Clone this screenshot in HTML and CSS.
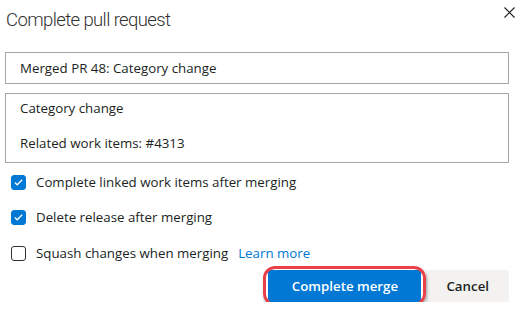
FILE: index.html
```html
<!DOCTYPE html>
<html lang="en">

<head>
    <meta charset="utf-8">
    <title>Complete pull request</title>
    <link rel="stylesheet" href="styles.css">
</head>

<body>
    <div class="dialog">
        <div class="header">
            <h1 class="title">Complete pull request</h1>
            <span class="close">
                <svg width="11" height="11" viewBox="0 0 11 11">
                    <path d="M0.5 0.5 L10.5 10.5 M10.5 0.5 L0.5 10.5" stroke="#222" stroke-width="1.2" fill="none" />
                </svg>
            </span>
        </div>

        <div class="field">Merged PR 48: Category change</div>

        <div class="field area">
            <div>Category change</div>
            <div>Related work items: #4313</div>
        </div>

        <div class="options">
            <label class="option">
                <span class="check on">
                    <svg width="9" height="7" viewBox="0 0 9 7"><path d="M0.8 3.6 L3.2 5.8 L8.2 0.8" stroke="#fff" stroke-width="1.3" fill="none" /></svg>
                </span>
                Complete linked work items after merging
            </label>
            <label class="option">
                <span class="check on">
                    <svg width="9" height="7" viewBox="0 0 9 7"><path d="M0.8 3.6 L3.2 5.8 L8.2 0.8" stroke="#fff" stroke-width="1.3" fill="none" /></svg>
                </span>
                Delete release after merging
            </label>
            <label class="option">
                <span class="check"></span>
                Squash changes when merging
                <a class="link" href="#">Learn more</a>
            </label>
        </div>

        <div class="footer">
            <span class="highlight">
                <button class="btn primary">Complete merge</button>
            </span>
            <button class="btn">Cancel</button>
        </div>
    </div>
</body>

</html>
```

FILE: styles.css
```css
body {
    margin: 0;
    background: #fff;
    font-family: "Open Sans", "Noto Sans", sans-serif;
    color: #201f1e;
}

.dialog {
    width: 504px;
    padding: 0 0 0 5px;
}

.header {
    display: flex;
    justify-content: space-between;
    align-items: flex-start;
    height: 52px;
}

.title {
    margin: 5px 0 0 1px;
    font-family: Roboto, "Open Sans", sans-serif;
    font-size: 18.5px;
    letter-spacing: -0.6px;
    font-weight: 300;
    line-height: 30px;
    color: #323130;
}

.close {
    margin: 7px -6px 0 0;
    display: flex;
}

.field {
    box-sizing: border-box;
    height: 32px;
    border: 1px solid #a6a6a6;
    padding: 0 14px;
    font-size: 13.3px;
    line-height: 30px;
}

.area {
    height: 70px;
    margin-top: 9px;
    padding-top: 5px;
    line-height: 18px;
    display: flex;
    flex-direction: column;
    gap: 17px;
}

.options {
    display: flex;
    flex-direction: column;
    gap: 15px;
    margin: 9px 0 0 6px;
}

.option {
    display: flex;
    align-items: center;
    font-size: 13.3px;
    line-height: 20px;
    gap: 10px;
}

.option:last-child {
    margin-top: 1px;
}

.check {
    box-sizing: border-box;
    width: 15px;
    height: 15px;
    border: 1px solid #323130;
    border-radius: 3px;
    display: flex;
    align-items: center;
    justify-content: center;
}

.check.on {
    background: #0078d4;
    border-color: #0078d4;
}

.link {
    color: #0078d4;
    text-decoration: none;
}

.footer {
    display: flex;
    justify-content: flex-end;
    gap: 5px;
    margin-top: 7px;
}

.highlight {
    position: relative;
    display: flex;
}

.highlight::after {
    content: "";
    position: absolute;
    left: -5px;
    right: -5px;
    top: -4px;
    bottom: -4px;
    border: 3px solid #e8414a;
    border-radius: 12px;
    box-shadow: 1px 2px 3px rgba(0, 0, 0, 0.35);
}

.btn {
    height: 32px;
    border: 0;
    border-radius: 2px;
    padding: 0 20px;
    font-family: inherit;
    font-size: 13.3px;
    font-weight: 600;
    background: #f3f2f1;
    color: #201f1e;
    min-width: 80px;
}

.primary {
    background: #0078d4;
    color: #fff;
    width: 153px;
}
```
